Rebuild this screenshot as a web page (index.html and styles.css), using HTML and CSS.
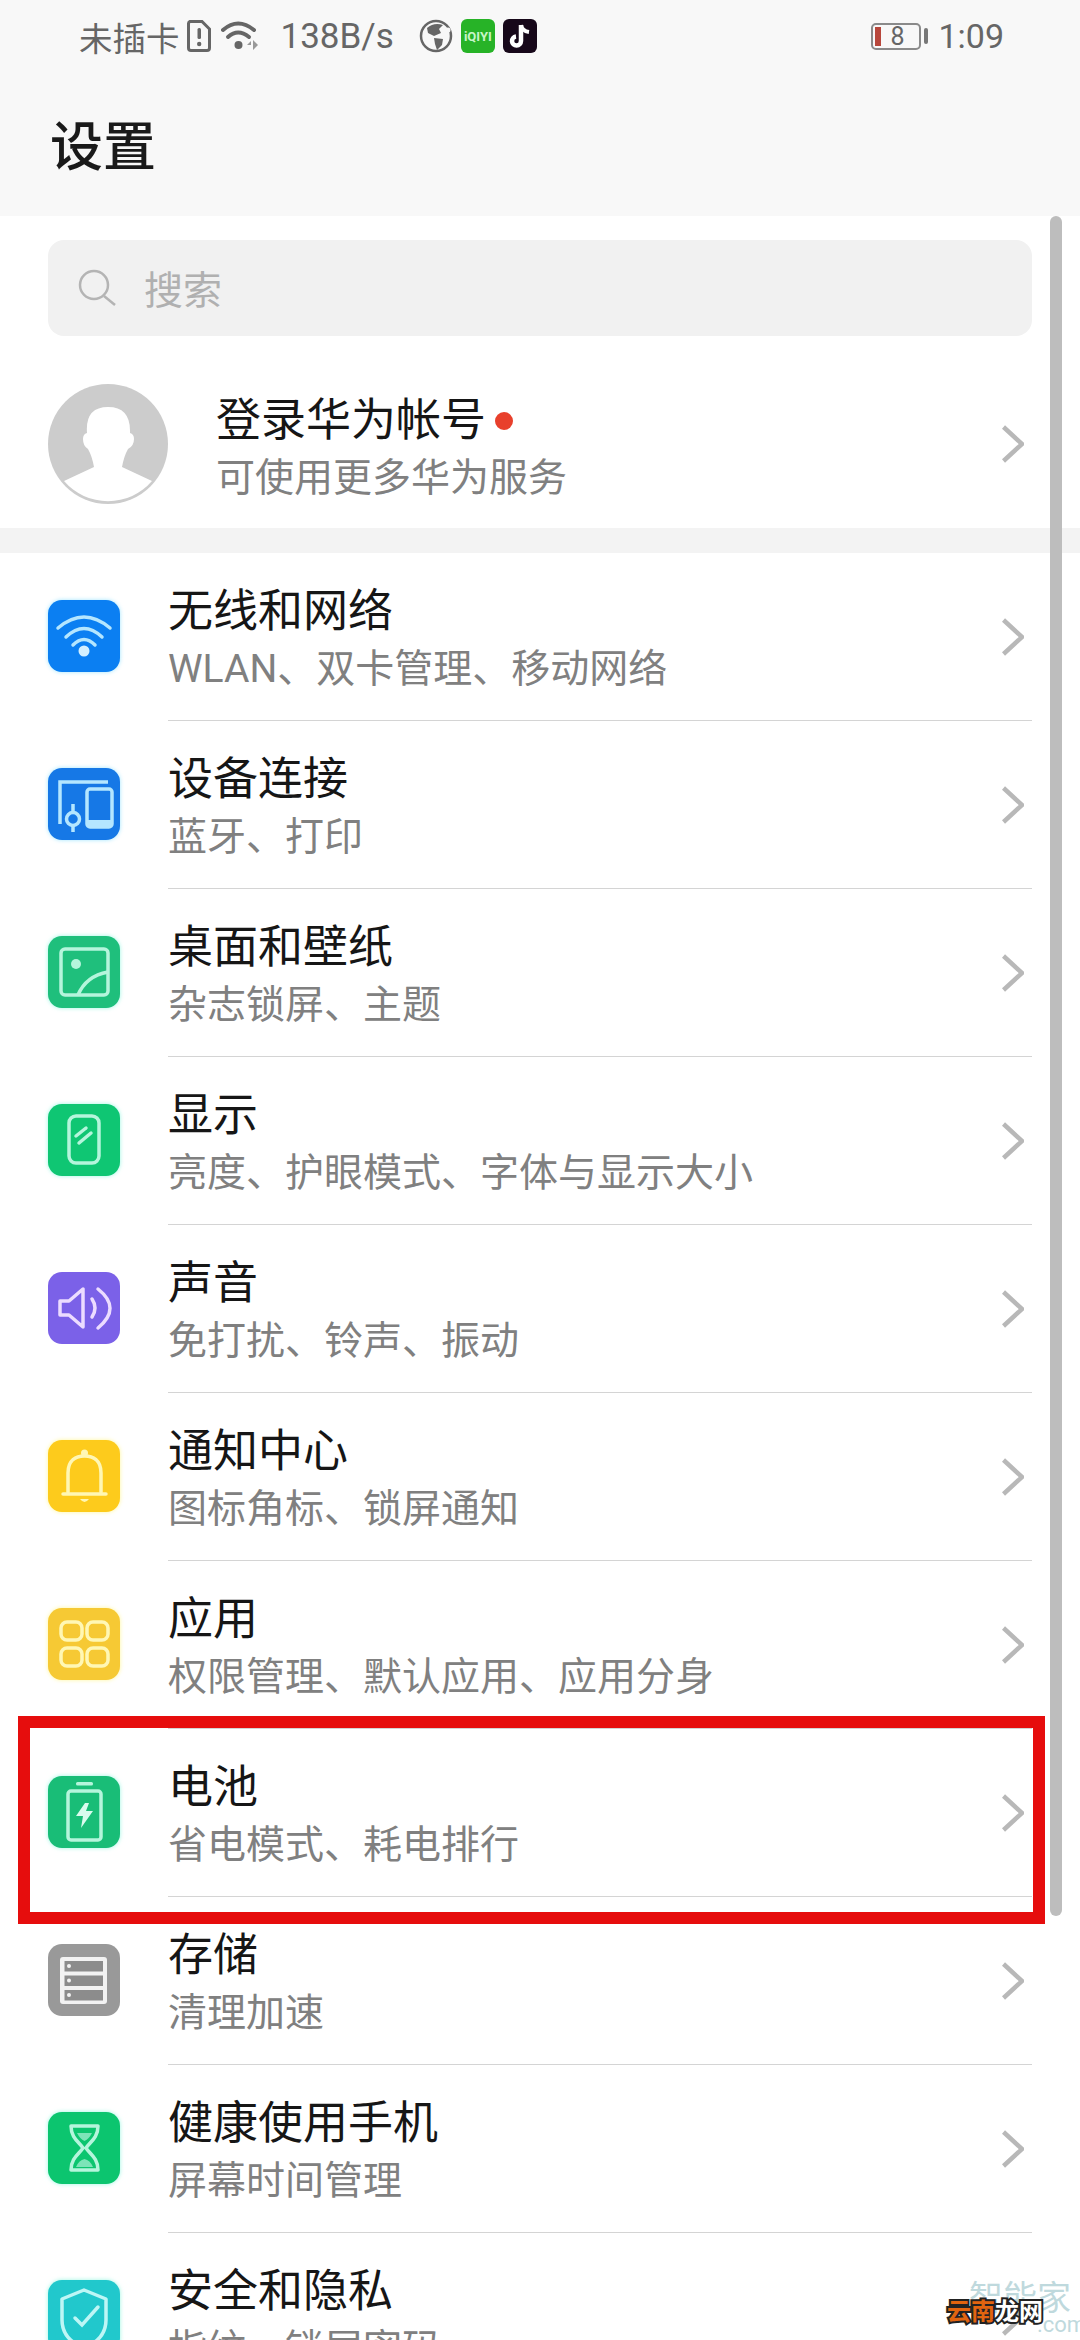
FILE: index.html
```html
<!DOCTYPE html>
<html lang="zh-CN">
  <head>
    <meta charset="UTF-8" />
    <meta name="viewport" content="width=device-width, initial-scale=1.0" />
    <title>设置</title>
    <link rel="stylesheet" href="styles.css">
  </head>
  <body>
    <div class="screen">
      <header class="top">
        <div class="status-bar">
          <span class="carrier">未插卡</span>
          <svg class="sim-icon" viewBox="0 0 24 32"><path d="M3 1.5H15L22.5 9V28A2.5 2.5 0 0 1 20 30.500H4A2.500 2.500 0 0 1 1.500 28V4A2.500 2.500 0 0 1 3 1.500Z" fill="none" stroke="#666" stroke-width="3"/><rect x="10.500" y="8" width="3.500" height="11" rx="1.500" fill="#666"/><circle cx="12.200" cy="24" r="2.200" fill="#666"/></svg>
          <svg class="wifi-icon" viewBox="0 0 38 32"><g fill="none" stroke="#666" stroke-width="4" stroke-linecap="round"><path d="M2 10Q17 -3 33 10"/><path d="M7 17Q17 8 28 17"/></g><circle cx="17.500" cy="25" r="4" fill="#666"/><path d="M26 25h4v-4zM32 20l5 5-5 5z" fill="#999"/></svg>
          <span class="speed">138B/s</span>
          <svg class="globe-icon" viewBox="0 0 34 34"><circle cx="17" cy="17" r="15" fill="none" stroke="#666" stroke-width="2.500"/><path d="M8 9Q15 3 24 6L20 10 22 14 15 17 9 14ZM15 19L24 20 23 26 18 31 16 25Z" fill="#666"/><circle cx="29" cy="11" r="2.500" fill="#f8f8f8"/></svg>
          <span class="app-tile iqiyi">iQIYI</span>
          <span class="app-tile tiktok">
            <svg viewBox="0 0 34 34"><path d="M18 6V22A4.500 4.500 0 1 1 13 17.500" fill="none" stroke="#fff" stroke-width="4.500"/><path d="M18 6Q19 12 26 13" fill="none" stroke="#fff" stroke-width="4"/></svg>
          </span>
          <div class="status-right">
            <div class="battery"><i></i><span>8</span></div>
            <b class="battery-tip"></b>
            <span class="clock">1:09</span>
          </div>
        </div>
        <h1 class="page-title">设置</h1>
      </header>

      <div class="search">
        <svg class="search-icon" viewBox="0 0 38 38"><circle cx="16" cy="17" r="14" fill="none" stroke="#b4b4b4" stroke-width="2.500"/><path d="M26 28L37 37" stroke="#b4b4b4" stroke-width="2.500"/></svg>
        <span>搜索</span>
      </div>

      <div class="account">
        <svg class="avatar" viewBox="0 0 120 120">
          <circle cx="60" cy="60" r="60" fill="#ccc"/>
          <path d="M16 97L46 83Q44 72 40 65Q35 62 35 55Q35 50 39 49Q37 23 60 23Q83 23 82 49Q86 50 86 55Q86 62 80 65Q76 72 74 83L104 97A58 58 0 0 1 16 97Z" fill="#fff"/>
        </svg>
        <div class="account-text">
          <div class="row-title">登录华为帐号<i class="red-dot"></i></div>
          <div class="row-sub">可使用更多华为服务</div>
        </div>
        <svg class="chevron" viewBox="0 0 22 38"><path d="M1.500 2L20 19L1.500 36" fill="none" stroke="#b8b8b8" stroke-width="4.500"/></svg>
      </div>

      <div class="band"></div>

      <ul class="menu">
        <li class="row">
          <svg class="tile glow-blue" viewBox="0 0 72 72"><rect width="72" height="72" rx="14" fill="#0b7ff2"/><g fill="none" stroke="#b4e6ff" stroke-width="3.500" stroke-linecap="round"><path d="M10 28Q36 6 62 28"/><path d="M18 37Q36 20 54 37"/><path d="M25 45Q36 34 47 45"/></g><circle cx="36" cy="51" r="5.500" fill="#d4f0ff"/></svg>
          <div class="row-main"><div class="row-text"><div class="row-title">无线和网络</div><div class="row-sub">WLAN、双卡管理、移动网络</div></div><svg class="chevron" viewBox="0 0 22 38"><path d="M1.500 2L20 19L1.500 36" fill="none" stroke="#b8b8b8" stroke-width="4.500"/></svg></div>
        </li>
        <li class="row">
          <svg class="tile glow-blue" viewBox="0 0 72 72"><rect width="72" height="72" rx="14" fill="#1678e6"/><g fill="none" stroke="#b4e6ff" stroke-width="3.500"><path d="M12 56V14H60"/><rect x="39" y="21" width="25" height="38" rx="3"/><circle cx="25" cy="51" r="6.500"/><path d="M25 36V44M25 58V64"/></g><rect x="39" y="52" width="25" height="7" fill="#b4e6ff"/></svg>
          <div class="row-main"><div class="row-text"><div class="row-title">设备连接</div><div class="row-sub">蓝牙、打印</div></div><svg class="chevron" viewBox="0 0 22 38"><path d="M1.500 2L20 19L1.500 36" fill="none" stroke="#b8b8b8" stroke-width="4.500"/></svg></div>
        </li>
        <li class="row">
          <svg class="tile glow-mint" viewBox="0 0 72 72"><rect width="72" height="72" rx="14" fill="#1fbf7c"/><g fill="none" stroke="#b5f5dc" stroke-width="3.500"><rect x="13" y="13" width="47" height="46" rx="4"/><path d="M30 59Q38 40 60 36"/></g><circle cx="28" cy="28" r="5" fill="#b5f5dc"/></svg>
          <div class="row-main"><div class="row-text"><div class="row-title">桌面和壁纸</div><div class="row-sub">杂志锁屏、主题</div></div><svg class="chevron" viewBox="0 0 22 38"><path d="M1.500 2L20 19L1.500 36" fill="none" stroke="#b8b8b8" stroke-width="4.500"/></svg></div>
        </li>
        <li class="row">
          <svg class="tile glow-mint" viewBox="0 0 72 72"><rect width="72" height="72" rx="14" fill="#0fc673"/><rect x="21" y="12" width="30" height="47" rx="7" fill="none" stroke="#b5f5dc" stroke-width="3.500"/><g stroke="#b5f5dc" stroke-width="3.500" stroke-linecap="round"><path d="M28 32L38 24"/><path d="M31 39L43 29"/></g></svg>
          <div class="row-main"><div class="row-text"><div class="row-title">显示</div><div class="row-sub">亮度、护眼模式、字体与显示大小</div></div><svg class="chevron" viewBox="0 0 22 38"><path d="M1.500 2L20 19L1.500 36" fill="none" stroke="#b8b8b8" stroke-width="4.500"/></svg></div>
        </li>
        <li class="row">
          <svg class="tile" viewBox="0 0 72 72"><rect width="72" height="72" rx="14" fill="#7b61e8"/><g fill="none" stroke="#ecdcff" stroke-width="3.500" stroke-linecap="round" stroke-linejoin="round"><path d="M12 29H21L35 17V55L21 43H12Z"/><path d="M44 27Q50 36 44 45"/><path d="M50 17Q74 36 50 56"/></g></svg>
          <div class="row-main"><div class="row-text"><div class="row-title">声音</div><div class="row-sub">免打扰、铃声、振动</div></div><svg class="chevron" viewBox="0 0 22 38"><path d="M1.500 2L20 19L1.500 36" fill="none" stroke="#b8b8b8" stroke-width="4.500"/></svg></div>
        </li>
        <li class="row">
          <svg class="tile glow-yellow" viewBox="0 0 72 72"><rect width="72" height="72" rx="14" fill="#fdcb1c"/><g fill="none" stroke="#fff7b4" stroke-width="3.500" stroke-linecap="round"><path d="M20 52V33C20 20 28 16 36.500 16C45 16 53 20 53 33V52"/><path d="M15 54H58"/></g><circle cx="36.500" cy="13" r="3.500" fill="#fff7b4"/><path d="M32 59H41Q36.500 65 32 59Z" fill="#fff7b4"/></svg>
          <div class="row-main"><div class="row-text"><div class="row-title">通知中心</div><div class="row-sub">图标角标、锁屏通知</div></div><svg class="chevron" viewBox="0 0 22 38"><path d="M1.500 2L20 19L1.500 36" fill="none" stroke="#b8b8b8" stroke-width="4.500"/></svg></div>
        </li>
        <li class="row">
          <svg class="tile glow-yellow" viewBox="0 0 72 72"><rect width="72" height="72" rx="14" fill="#f6c934"/><g fill="none" stroke="#fff7b4" stroke-width="3.500"><rect x="13" y="14" width="21" height="18" rx="6"/><rect x="39" y="14" width="21" height="18" rx="6"/><rect x="13" y="40" width="21" height="18" rx="6"/><rect x="39" y="40" width="21" height="18" rx="6"/></g></svg>
          <div class="row-main"><div class="row-text"><div class="row-title">应用</div><div class="row-sub">权限管理、默认应用、应用分身</div></div><svg class="chevron" viewBox="0 0 22 38"><path d="M1.500 2L20 19L1.500 36" fill="none" stroke="#b8b8b8" stroke-width="4.500"/></svg></div>
        </li>
        <li class="row">
          <svg class="tile glow-mint" viewBox="0 0 72 72"><rect width="72" height="72" rx="14" fill="#19bd77"/><rect x="20" y="15" width="33" height="49" rx="3" fill="none" stroke="#b5f5dc" stroke-width="3.500"/><rect x="28" y="6" width="17" height="3.500" rx="1.500" fill="#b5f5dc"/><path d="M37 27L28 40H35L33 52L45 35H38L41 27Z" fill="#d9fbee"/></svg>
          <div class="row-main"><div class="row-text"><div class="row-title">电池</div><div class="row-sub">省电模式、耗电排行</div></div><svg class="chevron" viewBox="0 0 22 38"><path d="M1.500 2L20 19L1.500 36" fill="none" stroke="#b8b8b8" stroke-width="4.500"/></svg></div>
        </li>
        <li class="row">
          <svg class="tile" viewBox="0 0 72 72"><rect width="72" height="72" rx="14" fill="#999"/><rect x="12" y="13" width="47" height="47" rx="3" fill="#f2f2f2"/><g fill="#8c8c8c"><rect x="16.500" y="17" width="38.500" height="10.500"/><rect x="16.500" y="31.500" width="38.500" height="10.500"/><rect x="16.500" y="46" width="38.500" height="10.500"/></g><g fill="#f2f2f2"><circle cx="21" cy="22" r="2"/><circle cx="21" cy="36.500" r="2"/><circle cx="21" cy="51" r="2"/></g></svg>
          <div class="row-main"><div class="row-text"><div class="row-title">存储</div><div class="row-sub">清理加速</div></div><svg class="chevron" viewBox="0 0 22 38"><path d="M1.500 2L20 19L1.500 36" fill="none" stroke="#b8b8b8" stroke-width="4.500"/></svg></div>
        </li>
        <li class="row">
          <svg class="tile glow-mint" viewBox="0 0 72 72"><rect width="72" height="72" rx="14" fill="#0cc56f"/><path d="M23 14H50C50 26 42 30 38 36C42 42 50 46 50 58H23C23 46 31 42 35 36C31 30 23 26 23 14Z" fill="none" stroke="#b5f5dc" stroke-width="3.500" stroke-linejoin="round"/><path d="M29 21H44Q41 27 36.500 29Q32 27 29 21ZM28 55Q31 48 36.500 47Q42 48 45 55Z" fill="#7de4b8"/></svg>
          <div class="row-main"><div class="row-text"><div class="row-title">健康使用手机</div><div class="row-sub">屏幕时间管理</div></div><svg class="chevron" viewBox="0 0 22 38"><path d="M1.500 2L20 19L1.500 36" fill="none" stroke="#b8b8b8" stroke-width="4.500"/></svg></div>
        </li>
        <li class="row">
          <svg class="tile glow-mint" viewBox="0 0 72 72"><rect width="72" height="72" rx="14" fill="#21c8cc"/><path d="M36 10L58 19V40C58 56 46 64 36 68C26 64 14 56 14 40V19Z" fill="none" stroke="#bdf6f5" stroke-width="3.500" stroke-linejoin="round"/><path d="M27 38L34 45L50 27" fill="none" stroke="#bdf6f5" stroke-width="3.500" stroke-linecap="round"/></svg>
          <div class="row-main"><div class="row-text"><div class="row-title">安全和隐私</div><div class="row-sub">指纹、锁屏密码</div></div><svg class="chevron" viewBox="0 0 22 38"><path d="M1.500 2L20 19L1.500 36" fill="none" stroke="#b8b8b8" stroke-width="4.500"/></svg></div>
        </li>
      </ul>

      <!-- things drawn over the list -->
      <div class="scrollbar"></div>
      <div class="red-box"></div>
      <div class="watermark">
        <span class="wm-back">智能家</span>
        <span class="wm-url">.com</span>
        <span class="wm-front"><em>云南</em>龙网</span>
      </div>
    </div>
  </body>
</html>
```

FILE: styles.css
```css
* {
  box-sizing: border-box;
}

body {
  margin: 0;
  background-color: white;
  font-family: Roboto, "Noto Sans CJK SC", sans-serif;
}

.screen {
  position: relative;
  width: 1080px;
  height: 2340px;
  overflow: hidden;
  background-color: white;
}

.top {
  height: 216px;
  background-color: #f8f8f8;
}

.status-bar {
  display: flex;
  align-items: center;
  height: 72px;
  padding: 0 76px 0 79px;
  color: #666;
  font-size: 33.5px;
}

.carrier {
  margin-right: 7px;
}

.sim-icon {
  width: 24px;
  height: 32px;
  margin-right: 10px;
}

.wifi-icon {
  width: 38px;
  height: 32px;
  margin-right: 22px;
}

.speed {
  margin-right: 25px;
  font-size: 35px;
}

.globe-icon {
  width: 34px;
  height: 34px;
  margin-right: 8px;
}

.app-tile {
  display: flex;
  align-items: center;
  justify-content: center;
  width: 34px;
  height: 34px;
  border-radius: 6px;
  margin-right: 8px;
}

.iqiyi {
  background-color: #27b327;
  color: #c8f5c8;
  font-size: 13px;
  font-weight: bold;
}

.tiktok {
  background-color: #17081a;
}

.tiktok svg {
  width: 34px;
  height: 34px;
}

.status-right {
  display: flex;
  align-items: center;
  margin-left: auto;
}

.battery {
  display: flex;
  align-items: center;
  width: 50px;
  height: 27px;
  padding-left: 2px;
  border: 2px solid #8a8a8a;
  border-radius: 5px;
  font-size: 25px;
}

.battery i {
  width: 6px;
  height: 19px;
  background-color: #b8473c;
}

.battery span {
  flex: 1;
  padding-right: 6px;
  text-align: center;
  line-height: 23px;
}

.battery-tip {
  width: 4px;
  height: 16px;
  margin: 0 10px 0 3px;
  background-color: #777;
  border-radius: 2px;
}

.clock {
  font-size: 34px;
}

.page-title {
  margin: 0;
  padding: 46px 0 0 50px;
  color: #1a1a1a;
  font-size: 53px;
  font-weight: 500;
  line-height: 60px;
}

.search {
  display: flex;
  align-items: center;
  height: 96px;
  margin: 24px 48px 0;
  padding: 0 0 2px 30px;
  background-color: #f1f1f1;
  border-radius: 16px;
  color: #b0b0b0;
  font-size: 39px;
}

.search-icon {
  width: 38px;
  height: 38px;
  margin-right: 28px;
}

.account {
  display: flex;
  align-items: center;
  height: 192px;
  padding: 24px 48px 0;
}

.avatar {
  width: 120px;
  height: 120px;
  margin-right: 48px;
}

.account-text {
  flex: 1;
  padding-top: 12px;
}

.red-dot {
  display: inline-block;
  width: 18px;
  height: 18px;
  margin-left: 9px;
  background-color: #e8402c;
  border-radius: 50%;
  vertical-align: 6px;
}

.band {
  height: 25px;
  background-color: #f3f3f3;
}

.menu {
  margin: 0;
  padding: 0;
  list-style: none;
}

.row {
  display: flex;
  height: 168px;
  padding: 0 48px;
}

.tile {
  flex: none;
  width: 72px;
  height: 72px;
  margin: 47px 48px 0 0;
}

.glow-mint {
  filter: drop-shadow(0 0 2px rgba(130, 245, 220, 0.8));
}

.glow-blue {
  filter: drop-shadow(0 0 2px rgba(120, 220, 255, 0.7));
}

.glow-yellow {
  filter: drop-shadow(0 0 2px rgba(255, 245, 130, 0.8));
}

.row-main {
  flex: 1;
  display: flex;
  align-items: center;
  border-bottom: 1px solid #d4d4d4;
}

.row-text {
  flex: 1;
  align-self: flex-start;
  padding-top: 31px;
}

.row-title {
  color: #161616;
  font-size: 45px;
  line-height: 56px;
}

.row-sub {
  color: #808080;
  font-size: 39px;
  line-height: 58px;
  white-space: nowrap;
}

.chevron {
  flex: none;
  width: 22px;
  height: 38px;
  margin-right: 8px;
}

.scrollbar {
  position: absolute;
  left: 1050px;
  top: 216px;
  width: 12px;
  height: 1700px;
  background-color: #bdbdbd;
  border-radius: 6px;
}

.red-box {
  position: absolute;
  left: 18px;
  top: 1716px;
  width: 1027px;
  height: 208px;
  border: 12px solid #e60d0d;
}

.watermark {
  position: absolute;
  left: 947px;
  top: 2276px;
  width: 133px;
  height: 64px;
}

.wm-back {
  position: absolute;
  left: 22px;
  top: 0;
  color: #bfd9dd;
  font-size: 34px;
  line-height: 44px;
  white-space: nowrap;
}

.wm-url {
  position: absolute;
  left: 90px;
  top: 36px;
  color: #bfd9dd;
  font-size: 22px;
}

.wm-front {
  position: absolute;
  left: 0;
  top: 20px;
  color: white;
  font-size: 24px;
  font-weight: bold;
  line-height: 32px;
  white-space: nowrap;
  -webkit-text-stroke: 4px #222;
  paint-order: stroke fill;
}

.wm-front em {
  color: #e2640f;
  font-style: normal;
}
```
